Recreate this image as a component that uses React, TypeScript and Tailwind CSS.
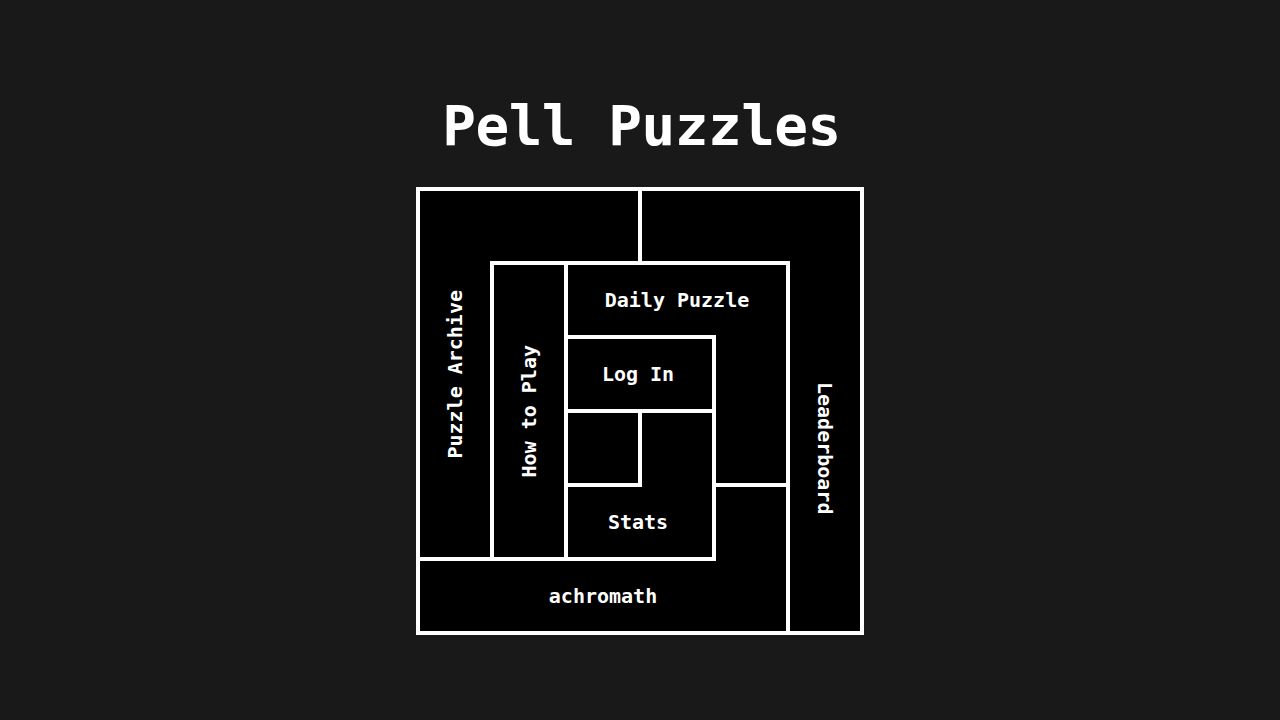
import React from "react";

const mono = { fontFamily: '"DejaVu Sans Mono", "Liberation Mono", monospace' };

function Cell({ area, className = "", children }: { area: string; className?: string; children?: React.ReactNode }) {
  return (
    <div className={`bg-black flex items-center justify-center text-white font-bold text-[20px] ${className}`} style={{ gridArea: area }}>
      {children}
    </div>
  );
}

export default function App() {
  return (
    <div className="min-h-[720px] w-full bg-[#191919] flex flex-col items-center pt-[98px]" style={mono}>
      <h1 className="text-white font-bold text-[56px] leading-[56px] mb-[33px] tracking-[-0.5px] pl-[3px]">Pell Puzzles</h1>
      <div className="bg-white p-1 grid grid-cols-[repeat(6,70px)] grid-rows-[repeat(6,70px)] gap-1">
        {/* Puzzle Archive */}
        <Cell area="1 / 1 / 6 / 2">
          <span className="[writing-mode:vertical-rl] rotate-180">Puzzle Archive</span>
        </Cell>
        <Cell area="1 / 2 / 2 / 4" className="-ml-1" />
        {/* Leaderboard */}
        <Cell area="1 / 6 / 7 / 7" className="pt-[74px]">
          <span className="[writing-mode:vertical-rl]">Leaderboard</span>
        </Cell>
        <Cell area="1 / 4 / 2 / 6" className="-mr-1" />
        {/* How to Play */}
        <Cell area="2 / 2 / 6 / 3">
          <span className="[writing-mode:vertical-rl] rotate-180">How to Play</span>
        </Cell>
        {/* Daily Puzzle */}
        <Cell area="2 / 3 / 3 / 6">Daily Puzzle</Cell>
        <Cell area="3 / 5 / 5 / 6" className="-mt-1" />
        {/* Log In */}
        <Cell area="3 / 3 / 4 / 5" className="pr-1">Log In</Cell>
        {/* Empty */}
        <Cell area="4 / 3 / 5 / 4" />
        {/* Stats */}
        <Cell area="5 / 3 / 6 / 5" className="pr-1">Stats</Cell>
        <Cell area="4 / 4 / 5 / 5" className="-mb-1" />
        {/* achromath */}
        <Cell area="6 / 1 / 7 / 6">achromath</Cell>
        <Cell area="5 / 5 / 6 / 6" className="-mb-1" />
      </div>
    </div>
  );
}
